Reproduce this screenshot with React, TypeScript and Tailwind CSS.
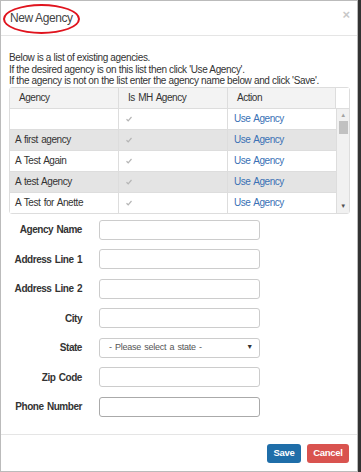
import React from 'react';

const agencies = ['', 'A first agency', 'A Test Again', 'A test Agency', 'A Test for Anette'];

const fields = ['Agency Name', 'Address Line 1', 'Address Line 2', 'City', 'State', 'Zip Code', 'Phone Number'];

function Check() {
  return (
    <svg width="8" height="8" viewBox="0 0 8 8" className="mx-auto">
      <path d="M1.5 4.2 L3.2 5.8 L6.5 2" fill="none" stroke="#b5b5b5" strokeWidth="1.2" />
    </svg>
  );
}

export default function App() {
  return (
    <div className="flex h-[472px] w-[361px] bg-[#333] font-['Liberation_Sans',Arial,sans-serif] text-[#333]">
      <div className="flex h-[472px] w-[358px] flex-col border border-[#bbb] bg-white">
        {/* header */}
        <div className="relative flex h-[35px] shrink-0 items-center border-b border-[#e5e5e5] px-[9px]">
          <span className="text-[12px] tracking-[-0.4px] text-[#444]">New Agency</span>
          <div className="absolute left-[2px] top-[3px] h-[30px] w-[77px] rounded-[50%] border-2 border-[#e0141e]" />
          <span className="absolute right-[7px] top-[4px] text-[13px] font-bold text-[#c8c8c8]">×</span>
        </div>

        {/* intro */}
        <div className="px-[8px] pt-[16px] text-[10px] leading-[11.5px] tracking-[-0.35px] text-[#333]">
          <p>Below is a list of existing agencies.</p>
          <p>If the desired agency is on this list then click 'Use Agency'.</p>
          <p>If the agency is not on the list enter the agency name below and click 'Save'.</p>
        </div>

        {/* table */}
        <div className="mx-[8px] w-[341px] rounded-[3px] border border-[#ddd] text-[10px] tracking-[-0.45px] [word-spacing:1px]">
          <div className="flex h-[20px] bg-[#f3f3f3]">
            <div className="flex w-[109px] items-center border-r border-[#ddd] px-[9px]">Agency</div>
            <div className="flex w-[109px] items-center border-r border-[#ddd] px-[9px]">Is MH Agency</div>
            <div className="flex w-[108px] items-center border-r border-[#ddd] px-[9px]">Action</div>
            <div className="flex-1 bg-white" />
          </div>
          <div className="flex">
            <div className="w-[326px]">
              {agencies.map((a, i) => (
                <div
                  key={i}
                  className={`flex h-[21px] border-t border-[#ddd] ${i % 2 === 1 ? 'bg-[#e4e4e4]' : 'bg-white'}`}
                >
                  <div className="flex w-[109px] items-center border-r border-[#ddd] px-[5px]">{a}</div>
                  <div className="flex w-[109px] items-center border-r border-[#ddd] pr-[88px]">
                    <Check />
                  </div>
                  <div className="flex w-[108px] items-center px-[6px] text-[#3a71b5]">Use Agency</div>
                </div>
              ))}
            </div>
            <div className="flex w-[14px] flex-col items-center border-t border-l border-[#ddd] bg-[#f1f1f1]">
              <span className="mt-[2px] text-[6px] leading-[8px] text-[#a3a3a3]">▲</span>
              <div className="mt-[2px] h-[13px] w-[9px] bg-[#c1c1c1]" />
              <div className="flex-1" />
              <span className="mb-[3px] text-[6px] leading-[8px] text-[#505050]">▼</span>
            </div>
          </div>
        </div>

        {/* form */}
        <div className="mt-[6px] flex flex-col gap-[9.5px] text-[10px] tracking-[-0.45px] [word-spacing:1px]">
          {fields.map((f) => (
            <div key={f} className="flex items-center">
              <label className="w-[81px] text-right font-bold text-[#333]">{f}</label>
              <div className="ml-[17px]">
                {f === 'State' ? (
                  <div className="flex h-[20px] w-[161px] items-center justify-between rounded-[3px] border border-[#ccc] pl-[9px] pr-[6px] text-[9px] tracking-[-0.25px] text-[#555]">
                    <span>- Please select a state -</span>
                    <span className="text-[7px] text-[#333]">▼</span>
                  </div>
                ) : (
                  <div
                    className={`h-[20px] w-[161px] rounded-[3px] border ${
                      f === 'Phone Number' ? 'border-[#aaa]' : 'border-[#ccc]'
                    }`}
                  />
                )}
              </div>
            </div>
          ))}
        </div>

        <div className="flex-1" />

        {/* footer */}
        <div className="flex h-[37px] items-start justify-end gap-[6px] border-t border-[#e5e5e5] px-[8px] pt-[9px]">
          <button className="h-[19px] w-[34px] rounded-[3px] bg-[#1f6ea9] text-[9.5px] font-bold tracking-[-0.3px] text-white">Save</button>
          <button className="h-[19px] w-[42px] rounded-[3px] bg-[#d9534f] text-[9.5px] font-bold tracking-[-0.3px] text-white">Cancel</button>
        </div>
      </div>
    </div>
  );
}
